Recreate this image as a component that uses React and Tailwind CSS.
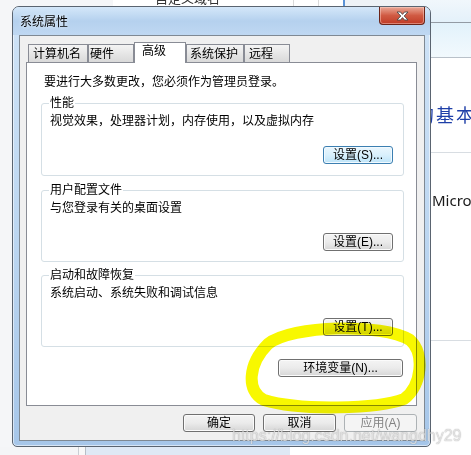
const font = "font-['Liberation_Sans','Noto_Sans_CJK_SC',sans-serif]";

const Btn = ({ children, className = '', variant = 'normal' }) => {
  const styles = {
    normal:
      'border-[#707070] bg-linear-to-b from-[#f4f4f4] via-[#ebebeb] to-[#d6d6d6] text-black shadow-[inset_0_0_0_1px_#fbfbfb]',
    focus:
      'border-[#3c7fb1] bg-linear-to-b from-[#eaf6fd] via-[#d9f0fc] to-[#bde4f8] text-black shadow-[inset_0_0_0_1px_#f2faff]',
    disabled: 'border-[#adb2b5] bg-[#f4f4f4] text-[#838383]',
  };
  return (
    <div
      className={`flex h-[18px] items-center justify-center rounded-[3px] border text-[12px] leading-none ${styles[variant]} ${className}`}
    >
      {children}
    </div>
  );
};

const tabs = [
  { label: '计算机名', cls: 'w-[60px] pl-[4px]' },
  { label: '硬件', cls: 'w-[46px] pl-[1px]' },
  { label: '高级', cls: 'w-[52px] pl-[7px]', active: true },
  { label: '系统保护', cls: 'w-[58px] pl-[3px]' },
  { label: '远程', cls: 'w-[46px] pl-[4px]' },
];

const Group = ({ title, text, button, className = '', focus }) => (
  <div
    className={`relative flex w-[363px] flex-col rounded-[3px] border border-[#d5dfe5] pl-[8px] pr-[10px] pt-[11px] ${className}`}
  >
    <span className="absolute -top-[7px] left-[7px] bg-white px-[1px] text-[12px] leading-[12px]">
      {title}
    </span>
    <p className="text-[12px] leading-[12px]">{text}</p>
    <Btn variant={focus ? 'focus' : 'normal'} className="mt-[19px] w-[70px] self-end">
      {button}
    </Btn>
  </div>
);

const CloseGlyph = () => (
  <svg width="13" height="10" viewBox="0 0 13 10">
    <path
      d="M1 1 H4.5 L6.5 3.4 L8.5 1 H12 L8.2 5 L12 9 H8.5 L6.5 6.6 L4.5 9 H1 L4.8 5 Z"
      fill="#ffffff"
      stroke="#4a4a4a"
      strokeWidth="0.9"
      strokeLinejoin="round"
    />
  </svg>
);

export default function App() {
  return (
    <div className={`relative h-[455px] w-[471px] overflow-hidden bg-[#f5f6f8] text-black ${font}`}>
      {/* desktop behind the dialog */}
      <div className="absolute left-[113px] top-0 h-[20px] w-[230px] bg-white">
        <span className="absolute left-[42px] -top-[8px] whitespace-nowrap text-[13px] leading-[13px] text-[#333]">自定义域名</span>
        <div className="absolute left-[180px] top-0 h-full w-px bg-[#dadada]" />
        <div className="absolute left-[205px] top-0 h-full w-px bg-[#dadada]" />
      </div>
      <div className="absolute left-[343px] top-0 h-[20px] w-[2px] bg-[#5b93d6]" />
      <div className="absolute left-[345px] top-0 h-[20px] w-[90px] bg-[#eef2f6]" />

      <div className="absolute left-[420px] top-0 flex h-[455px] w-[51px] flex-col bg-white">
        <div className="h-[22px] bg-linear-to-b from-[#f1f7fc] to-[#e4f1fa]" />
        <div className="h-px bg-[#939ba4]" />
        <div className="h-[34px] bg-linear-to-b from-[#e2f2fb] to-[#f2f9fd]" />
        <div className="h-px bg-[#b9c1c9]" />
        <div className="h-[94px]" />
        <div className="h-px bg-[#d8dde2]" />
        <div className="h-[187px]" />
        <div className="h-px bg-[#d8dde2]" />
      </div>
      <span className="absolute left-[416px] top-[107px] whitespace-nowrap text-[18px] leading-[18px] tracking-[2px] text-[#1e3fa8]">的基本</span>
      <span className="absolute left-[432px] top-[191px] whitespace-nowrap font-['Noto_Sans',sans-serif] text-[15px] leading-[18px] text-[#1a1a1a]">Microsoft</span>

      <div className="absolute left-0 top-[447px] flex h-[8px] w-[471px]">
        <div className="w-[78px] bg-[#f4f5f7]" />
        <div className="w-px bg-[#c9ced4]" />
        <div className="w-[6px] bg-[#f8f8f8]" />
        <div className="w-px bg-[#b8bec6]" />
        <div className="w-[204px] bg-[#dfe9f5]" />
        <div className="flex-1 bg-white" />
      </div>

      {/* dialog window */}
      <div className="absolute left-[12px] top-[6px] flex h-[441px] w-[419px] flex-col rounded-t-[7px] rounded-b-[5px] border border-[#5a6470] bg-linear-to-b from-[#cfe3f7] via-[#bdd7f1] to-[#a6c6e9] pb-[5px] pl-[6px] pr-[5px] shadow-[inset_0_0_0_1px_rgba(255,255,255,0.55)]">
        <div className="-ml-[6px] -mr-[5px] flex h-[28px] items-start justify-between rounded-t-[6px] bg-linear-to-b from-[#d4e7f9] via-[#b5d1ee] to-[#bfd8f2] pl-[7px] pr-[5px]">
          <span className="mt-[9px] text-[12px] leading-[12px] [text-shadow:0_0_4px_#ffffff]">系统属性</span>
          <div className="flex h-[18px] w-[46px] items-center justify-center rounded-b-[4px] border border-t-0 border-[#6b2418] bg-linear-to-b from-[#e9a796] via-[#d05a43] to-[#c03a25] shadow-[inset_0_0_0_1px_rgba(255,220,210,0.45)]">
            <CloseGlyph />
          </div>
        </div>

        <div className="flex h-[406px] w-[406px] flex-col border border-[#7f8993] bg-[#f0f0f0] pl-[6px] pt-[6px]">
          <div className="relative z-10 flex h-[20px] items-end pl-[2px]">
            {tabs.map((t) =>
              t.active ? (
                <div
                  key={t.label}
                  className={`-mb-px flex h-[21px] items-start border border-b-0 border-[#898c95] bg-white pt-[2px] text-[12px] leading-[12px] ${t.cls}`}
                >
                  {t.label}
                </div>
              ) : (
                <div
                  key={t.label}
                  className={`flex h-[18px] items-center border border-b-0 border-[#898c95] bg-linear-to-b from-[#f4f4f4] to-[#d9d9d9] text-[12px] leading-[12px] ${t.cls}`}
                >
                  {t.label}
                </div>
              )
            )}
          </div>

          <div className="flex h-[344px] w-[391px] flex-col border border-[#898c95] bg-white pl-[14px] pt-[13px]">
            <p className="ml-[3px] text-[12px] leading-[12px]">要进行大多数更改，您必须作为管理员登录。</p>
            <Group
              className="mt-[15px] h-[73px]"
              title="性能"
              text="视觉效果，处理器计划，内存使用，以及虚拟内存"
              button="设置(S)..."
              focus
            />
            <Group
              className="mt-[14px] h-[72px]"
              title="用户配置文件"
              text="与您登录有关的桌面设置"
              button="设置(E)..."
            />
            <Group
              className="mt-[13px] h-[72px]"
              title="启动和故障恢复"
              text="系统启动、系统失败和调试信息"
              button="设置(T)..."
            />
            <div className="flex w-[363px] justify-end pr-[1px]">
              <Btn className="mt-[12px] w-[125px]">环境变量(N)...</Btn>
            </div>
          </div>

          <div className="mt-[8px] flex w-[391px] justify-end gap-[8px]">
            <Btn className="w-[72px]">确定</Btn>
            <Btn className="w-[73px]">取消</Btn>
            <Btn className="w-[73px]" variant="disabled">应用(A)</Btn>
          </div>
        </div>
      </div>

      {/* yellow highlighter mark */}
      <svg
        className="pointer-events-none absolute left-0 top-0 mix-blend-multiply"
        width="471"
        height="455"
        viewBox="0 0 471 455"
      >
        <path
          d="M268 344 C292 325, 382 323, 410 340 C425 353, 422 386, 404 399 C378 409, 300 411, 264 400 C246 391, 248 364, 268 344 Z"
          fill="none"
          stroke="#f8f800"
          strokeWidth="12"
          strokeLinejoin="round"
        />
      </svg>

      <span className="pointer-events-none absolute left-[232px] top-[427px] whitespace-nowrap font-['Liberation_Sans',sans-serif] text-[16px] leading-[18px] text-white/70 [text-shadow:0_0_1px_rgba(0,0,0,0.45)]">
        https://blog.csdn.net/wangdhy29
      </span>
    </div>
  );
}
